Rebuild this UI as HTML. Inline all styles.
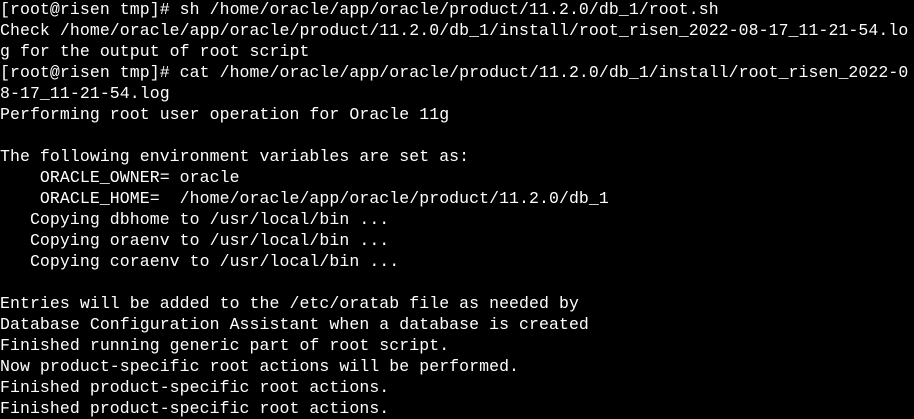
<!DOCTYPE html>
<html><head><meta charset="utf-8"><style>
html,body{margin:0;padding:0;background:#000;width:914px;height:416px;overflow:hidden}
pre{margin:0;padding:0;position:absolute;left:0;top:-1px;color:#fff;font-family:"Liberation Mono",monospace;font-size:16.5px;letter-spacing:0.08px;line-height:21px;white-space:pre}
</style></head><body><pre>[root@risen tmp]# sh /home/oracle/app/oracle/product/11.2.0/db_1/root.sh
Check /home/oracle/app/oracle/product/11.2.0/db_1/install/root_risen_2022-08-17_11-21-54.lo
g for the output of root script
[root@risen tmp]# cat /home/oracle/app/oracle/product/11.2.0/db_1/install/root_risen_2022-0
8-17_11-21-54.log
Performing root user operation for Oracle 11g

The following environment variables are set as:
    ORACLE_OWNER= oracle
    ORACLE_HOME=  /home/oracle/app/oracle/product/11.2.0/db_1
   Copying dbhome to /usr/local/bin ...
   Copying oraenv to /usr/local/bin ...
   Copying coraenv to /usr/local/bin ...

Entries will be added to the /etc/oratab file as needed by
Database Configuration Assistant when a database is created
Finished running generic part of root script.
Now product-specific root actions will be performed.
Finished product-specific root actions.
Finished product-specific root actions.</pre></body></html>
